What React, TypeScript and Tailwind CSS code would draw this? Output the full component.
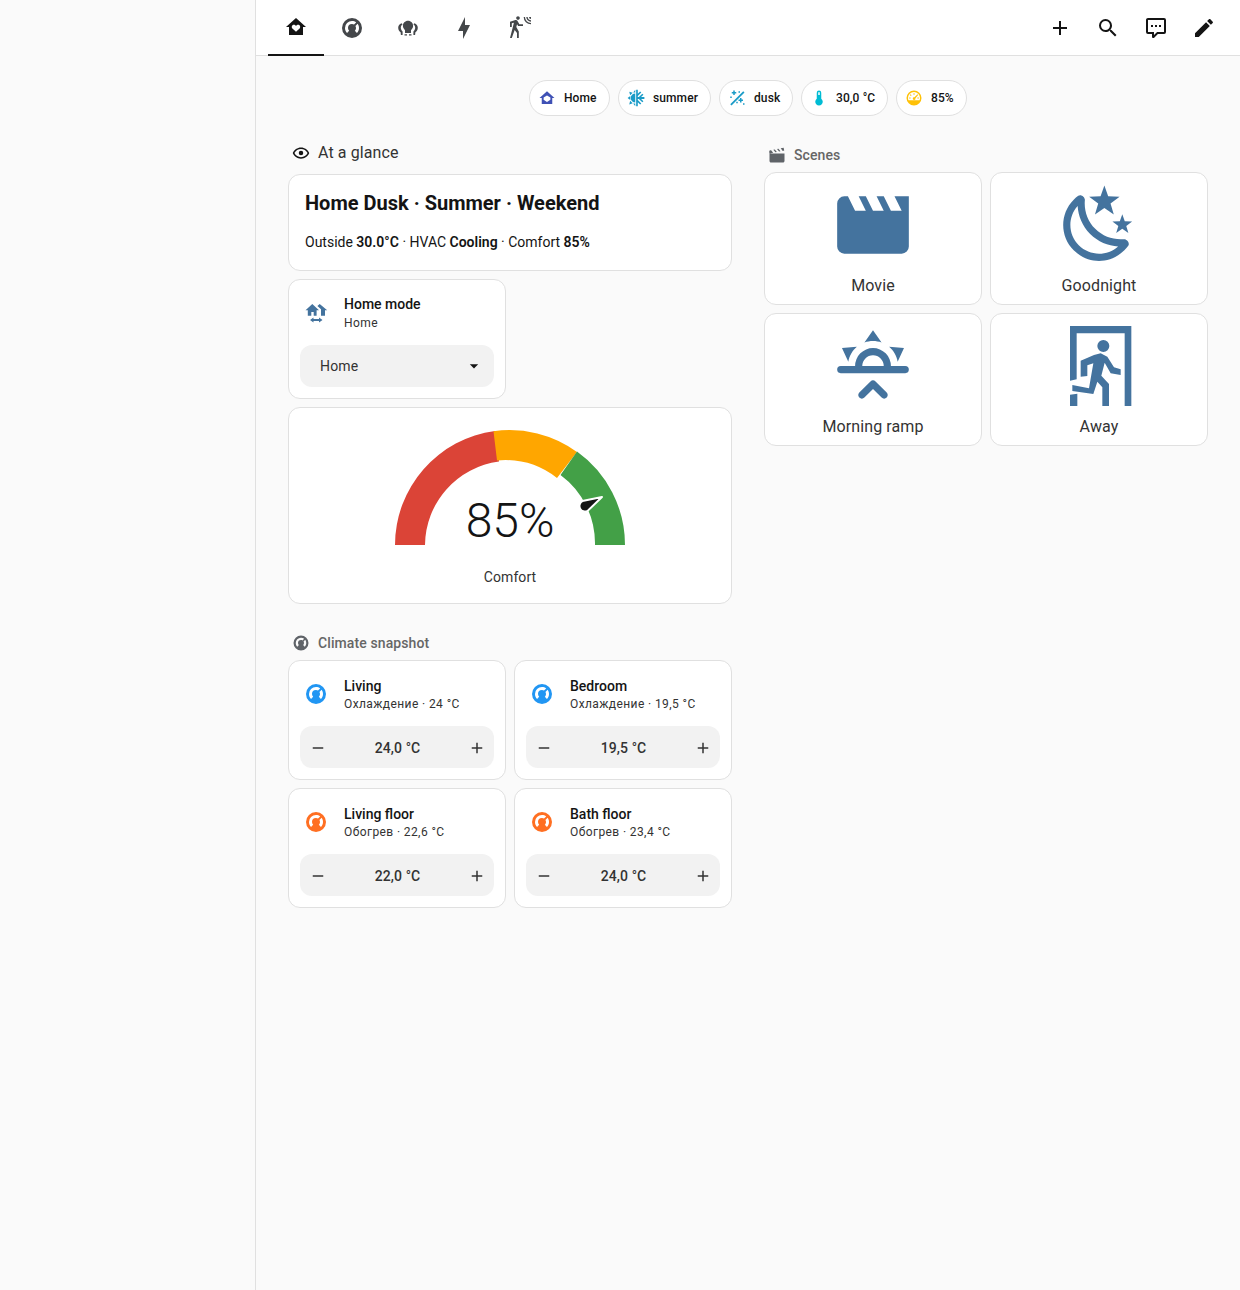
const FONT = "font-['Roboto',sans-serif]";

const mdi = {
  home: "M12 3L2 12H5V20H19V12H22L12 3M12 16.8L8.4 13.4C7.1 12.1 8 9.7 9.8 9.7C10.7 9.7 11.5 10.2 12 10.9C12.5 10.2 13.3 9.7 14.2 9.7C16 9.7 16.9 12.1 15.6 13.4L12 16.8Z",
  thermostat: "M16.95,16.95L14.83,14.83C15.55,14.1 16,13.1 16,12C16,11.26 15.79,10.57 15.43,10L17.6,7.81C18.5,9 19,10.43 19,12C19,13.93 18.22,15.68 16.95,16.95M12,5C13.57,5 15,5.5 16.19,6.4L14,8.56C13.43,8.21 12.74,8 12,8A4,4 0 0,0 8,12C8,13.1 8.45,14.1 9.17,14.83L7.05,16.95C5.78,15.68 5,13.93 5,12A7,7 0 0,1 12,5M12,2A10,10 0 0,0 2,12A10,10 0 0,0 12,22A10,10 0 0,0 22,12A10,10 0 0,0 12,2Z",
  lights: "M12 4.7C9 4.7 6.9 7 6.9 9.8C6.9 11.8 8 13.3 9 14.2V17H15V14.2C16 13.3 17.1 11.8 17.1 9.8C17.1 7 15 4.7 12 4.7M5.5 7.2C3.5 8 2.2 9.6 2.2 11.8C2.2 13.8 3.3 15.3 4.6 16.3L4.9 19H6.6V15.5C5.6 14.6 4.8 13.3 4.8 11.8C4.8 10.2 5.5 9 6.6 8.2L5.5 7.2M18.5 7.2L17.4 8.2C18.5 9 19.2 10.2 19.2 11.8C19.2 13.3 18.4 14.6 17.4 15.5V19H19.1L19.4 16.3C20.7 15.3 21.8 13.8 21.8 11.8C21.8 9.6 20.5 8 18.5 7.2M8.5 18.3H11V19.5H8.5V18.3M13 18.3H15.5V19.5H13V18.3Z",
  bolt: "M11 15H6L13 1V9H18L11 23V15Z",
  motion: "M10,0.2C9,0.2 8.2,1 8.2,2C8.2,3 9,3.8 10,3.8C11,3.8 11.8,3 11.8,2C11.8,1 11,0.2 10,0.2M15.67,1A7.33,7.33 0 0,0 23,8.33V7A6,6 0 0,1 17,1H15.67M18.33,1C18.33,3.58 20.42,5.67 23,5.67V4.33C21.16,4.33 19.67,2.84 19.67,1H18.33M21,1A2,2 0 0,0 23,3V1H21M7.92,4.03C7.75,4.03 7.58,4.06 7.42,4.11L2,5.8V11H3.8V7.33L5.91,6.67L2,22H3.8L6.67,13.89L9,17V22H10.8V15.59L8.31,11.05L9.04,8.18L10.12,10H15V8.2H11.38L9.38,4.87C9.08,4.37 8.54,4.03 7.92,4.03Z",
  plus: "M19,13H13V19H11V13H5V11H11V5H13V11H19V13Z",
  minus: "M19,13H5V11H19V13Z",
  magnify: "M9.5,3A6.5,6.5 0 0,1 16,9.5C16,11.11 15.41,12.59 14.44,13.73L14.71,14H15.5L20.5,19L19,20.5L14,15.5V14.71L13.73,14.44C12.59,15.41 11.11,16 9.5,16A6.5,6.5 0 0,1 3,9.5A6.5,6.5 0 0,1 9.5,3M9.5,5C7,5 5,7 5,9.5C5,12 7,14 9.5,14C12,14 14,12 14,9.5C14,7 12,5 9.5,5Z",
  comment: "M9,22A1,1 0 0,1 8,21V18H4A2,2 0 0,1 2,16V4C2,2.89 2.9,2 4,2H20A2,2 0 0,1 22,4V16A2,2 0 0,1 20,18H13.9L10.2,21.71C10,21.9 9.75,22 9.5,22V22H9M10,16V19.08L13.08,16H20V4H4V16H10M17,11H15V9H17V11M13,11H11V9H13V11M9,11H7V9H9V11Z",
  pencil: "M20.71,7.04C21.1,6.65 21.1,6 20.71,5.63L18.37,3.29C18,2.9 17.35,2.9 16.96,3.29L15.12,5.12L18.87,8.87M3,17.25V21H6.75L17.81,9.93L14.06,6.18L3,17.25Z",
  eye: "M12,9A3,3 0 0,1 15,12A3,3 0 0,1 12,15A3,3 0 0,1 9,12A3,3 0 0,1 12,9M12,4.5C17,4.5 21.27,7.61 23,12C21.27,16.39 17,19.5 12,19.5C7,19.5 2.73,16.39 1,12C2.73,7.61 7,4.5 12,4.5M3.18,12C4.83,15.36 8.24,17.5 12,17.5C15.76,17.5 19.17,15.36 20.82,12C19.17,8.64 15.76,6.5 12,6.5C8.24,6.5 4.83,8.64 3.18,12Z",
  clapper: "M20.84 2.18L16.91 2.96L19.65 6.5L21.62 6.1L20.84 2.18M13.97 3.54L12 3.93L14.75 7.46L16.71 7.07L13.97 3.54M9.07 4.5L7.1 4.91L9.85 8.44L11.81 8.05L9.07 4.5M4.16 5.5L3.18 5.69A2 2 0 0 0 1.61 8.04L2 10L6.9 9.03L4.16 5.5M2 10V20C2 21.11 2.9 22 4 22H20C21.11 22 22 21.11 22 20V10H2Z",
  movie: "M18,4L20,8H17L15,4H13L15,8H12L10,4H8L10,8H7L5,4H4A2,2 0 0,0 2,6V18A2,2 0 0,0 4,20H20A2,2 0 0,0 22,18V4H18Z",
  night: "M17.75,4.09L15.22,6.03L16.13,9.09L13.5,7.28L10.87,9.09L11.78,6.03L9.25,4.09L12.44,4L13.5,1L14.56,4L17.75,4.09M21.25,11L19.61,12.25L20.2,14.23L18.5,13.06L16.8,14.23L17.39,12.25L15.75,11L17.81,10.95L18.5,9L19.19,10.95L21.25,11M18.97,15.95C19.8,15.87 20.69,17.05 20.16,17.8C19.84,18.25 19.5,18.67 19.08,19.07C15.17,23 8.84,23 4.94,19.07C1.03,15.17 1.03,8.83 4.94,4.93C5.34,4.53 5.76,4.17 6.21,3.85C6.96,3.32 8.14,4.21 8.06,5.04C7.79,7.9 8.75,10.87 10.95,13.06C13.14,15.26 16.1,16.22 18.97,15.95M17.33,17.97C14.5,17.81 11.7,16.64 9.53,14.5C7.36,12.31 6.2,9.5 6.04,6.68C3.23,9.82 3.34,14.64 6.35,17.66C9.37,20.67 14.19,20.78 17.33,17.97Z",
  sunrise: "M3,12H7A5,5 0 0,1 12,7A5,5 0 0,1 17,12H21A1,1 0 0,1 22,13A1,1 0 0,1 21,14H3A1,1 0 0,1 2,13A1,1 0 0,1 3,12M15,12A3,3 0 0,0 12,9A3,3 0 0,0 9,12H15M12,2L14.39,5.42C13.65,5.15 12.84,5 12,5C11.16,5 10.35,5.15 9.61,5.42L12,2M3.34,7L7.5,6.65C6.9,7.16 6.36,7.78 5.94,8.5C5.5,9.24 5.25,10 5.11,10.79L3.34,7M20.65,7L18.88,10.79C18.74,10 18.47,9.23 18.05,8.5C17.63,7.78 17.1,7.15 16.5,6.64L20.65,7M12.71,16.3L15.82,19.41C16.21,19.8 16.21,20.43 15.82,20.82C15.43,21.21 14.8,21.21 14.41,20.82L12,18.41L9.59,20.82C9.2,21.21 8.57,21.21 8.18,20.82C7.79,20.43 7.79,19.8 8.18,19.41L11.29,16.3C11.5,16.1 11.74,16 12,16C12.26,16 12.5,16.1 12.71,16.3Z",
  exit: "M3.3 0H21.7V24H19.7V2.2H5.3V16L3.3 16.4V0M3.3 20.6L5.5 20.3V24H3.3V20.6M13.3 4.2A1.8 1.8 0 1 1 13.3 7.8A1.8 1.8 0 1 1 13.3 4.2M6.5 10.4L10.5 8.7L12.5 8.2L14.5 9.2L16.5 12.4L18.5 13V14.7L15.5 14.2L13.7 11L12.7 14.9L15 17.4V24H13V18.4L11.5 16.7L10.3 20.4L4 19.5V17.7L9 18.7L10.3 11.2L8.5 11.8V15L6.5 15.2V10.4Z",
  homeSwitch: "M8.3 3L1.5 9.3H3.8V14.8H7.3V11H9.7V14.8H12.6V9.3H15L8.3 3M15.7 3L13.4 5L17 8.3V14.8H21V9.3H23.2L15.7 3M9.5 16.5L6 19L9.5 21.5V20H15V21.5L18.5 19L15 16.5V18H9.5V16.5Z",
  menuDown: "M7,10L12,15L17,10H7Z",
  chipHome: "M12 3L2 12H5V20H19V12H22L12 3M12 8.8L16.5 11.2V14.2L12 17.4L7.5 14.2V11.2L12 8.8Z",
  summer: "M11 6A6 6 0 0 0 11 18V6M11 1L8.3 4.8H11V1M3 3.5L4.2 8.2L7.6 5L3 3.5M0.8 12L4.4 14.6V9.4L0.8 12M3 20.5L7.6 19L4.2 15.8L3 20.5M11 23V19.2H8.3L11 23M12.2 1H14.4V6.4L17.5 3.3L19 4.8L14.4 9.4V10.8H15.8L20.4 6.2L21.9 7.7L18.8 10.8H23.2V13.2H18.8L21.9 16.3L20.4 17.8L15.8 13.2H14.4V14.6L19 19.2L17.5 20.7L14.4 17.6V23H12.2V1Z",
  dusk: "M3 20.3L20.3 3L22 4.7L4.7 22L3 20.3M7 2H9V4H11V6H9V8H7V6H5V4H7V2M3 10H5V12H3V10M11 17H13V19H11V17M16 12H18V14H20V16H18V18H16V16H14V14H16V12M20 19H22V21H20V19M14 3H16V5H14V3Z",
  thermo: "M15 13V5A3 3 0 0 0 9 5V13A5 5 0 1 0 15 13M12 4A1 1 0 0 1 13 5V8H11V5A1 1 0 0 1 12 4Z",
  gauge: "M12 2A10 10 0 1 0 12 22A10 10 0 1 0 12 2M12 4A8 8 0 0 1 20 12C20 13.1 19.8 14.1 19.4 15H4.6C4.2 14.1 4 13.1 4 12A8 8 0 0 1 12 4M11.3 5.5V7.5H12.7V5.5H11.3M7.4 7L6.4 8L7.8 9.4L8.8 8.4L7.4 7M16.6 7L12.6 11.1A1.8 1.8 0 1 0 13.9 12.4L17.6 8L16.6 7M5.5 11.3V12.7H7.5V11.3H5.5M16.5 11.3V12.7H18.5V11.3H16.5Z",
};

function Icon({ d, className }: { d: string; className: string }) {
  return (
    <svg viewBox="0 0 24 24" fill="currentColor" fillRule="evenodd" className={`shrink-0 ${className}`}>
      <path d={d} />
    </svg>
  );
}

function Card({ className, children }: { className?: string; children: React.ReactNode }) {
  return <div className={`rounded-xl border border-[#e0e0e0] bg-white ${className ?? ""}`}>{children}</div>;
}

const chips = [
  { icon: mdi.chipHome, color: "text-[#3f51b5]", label: "Home", wrap: "w-[81px]" },
  { icon: mdi.summer, color: "text-[#1a9bc7]", label: "summer", wrap: "w-[93px]" },
  { icon: mdi.dusk, color: "text-[#1a9bc7]", label: "dusk", wrap: "w-[74px]" },
  { icon: mdi.thermo, color: "text-[#00bcd4]", label: "30,0 °C", wrap: "w-[87px]" },
  { icon: mdi.gauge, color: "text-[#ffc107]", label: "85%", wrap: "w-[71px]" },
];

const scenes = [
  { icon: mdi.movie, label: "Movie", size: "h-[86px] w-[86px]" },
  { icon: mdi.night, label: "Goodnight", size: "h-[86px] w-[86px]" },
  { icon: mdi.sunrise, label: "Morning ramp", size: "h-[86px] w-[86px]" },
  { icon: mdi.exit, label: "Away", size: "my-[3px] h-[80px] w-[80px]" },
];

const climates = [
  { name: "Living", state: "Охлаждение · 24 °C", target: "24,0 °C", color: "text-[#2196f3]" },
  { name: "Bedroom", state: "Охлаждение · 19,5 °C", target: "19,5 °C", color: "text-[#2196f3]" },
  { name: "Living floor", state: "Обогрев · 22,6 °C", target: "22,0 °C", color: "text-[#ff6f22]" },
  { name: "Bath floor", state: "Обогрев · 23,4 °C", target: "24,0 °C", color: "text-[#ff6f22]" },
];

function Gauge() {
  return (
    <svg viewBox="0 0 230 115" className="h-[115px] w-[230px]">
      <path d="M0 115A115 115 0 0 1 100 1L104 31.5A85 85 0 0 0 30 115Z" fill="#db4437" />
      <path d="M98.5 1.2A115 115 0 0 1 182 22L162 48A85 85 0 0 0 102 30.5Z" fill="#ffa600" />
      <path d="M182 21.5A115 115 0 0 1 230 115H200A85 85 0 0 0 165.5 45Z" fill="#43a047" />
      <path d="M207 67L192.6 80.9A5.5 5.5 0 1 1 187.4 71.1Z" fill="#141414" stroke="#fff" strokeWidth="2" strokeLinejoin="round" />
    </svg>
  );
}

export default function App() {
  return (
    <div className={`flex min-h-[1290px] bg-[#fafafa] text-[#141414] ${FONT}`}>
      <aside className="w-[256px] shrink-0 border-r border-[#e0e0e0] bg-[#fafafa]" />
      <div className="min-w-0 flex-1">
        <header className="flex h-[56px] items-center justify-between border-b border-[#e0e0e0] bg-white px-[12px]">
          <nav className="flex h-[56px] self-start">
            <div className="flex w-[56px] items-center justify-center border-b-2 border-[#141414]">
              <Icon d={mdi.home} className="h-6 w-6 text-[#141414]" />
            </div>
            {[mdi.thermostat, mdi.lights, mdi.bolt, mdi.motion].map((d) => (
              <div key={d} className="flex w-[56px] items-center justify-center">
                <Icon d={d} className="h-6 w-6 text-[#44474a]" />
              </div>
            ))}
          </nav>
          <div className="flex">
            {[mdi.plus, mdi.magnify, mdi.comment, mdi.pencil].map((d) => (
              <div key={d} className="flex h-12 w-12 items-center justify-center">
                <Icon d={d} className="h-6 w-6 text-[#141414]" />
              </div>
            ))}
          </div>
        </header>

        <main className="px-[32px] pt-[24px]">
          <div className="flex justify-center gap-2">
            {chips.map((c) => (
              <div key={c.label} className={`flex h-[36px] items-center gap-2 rounded-[18px] border border-[#e0e0e0] bg-white pl-2 ${c.wrap}`}>
                <Icon d={c.icon} className={`h-[18px] w-[18px] ${c.color}`} />
                <span className="text-[12px] font-medium leading-4 tracking-[0.1px]">{c.label}</span>
              </div>
            ))}
          </div>

          <div className="mt-[22px] flex gap-[32px]">
            <section className="w-[444px] shrink-0">
              <div className="flex h-[30px] items-center gap-2 pl-[4px]">
                <Icon d={mdi.eye} className="h-[18px] w-[18px] text-[#141414]" />
                <span className="text-[16px] leading-5 tracking-[0.1px] text-[#333]">At a glance</span>
              </div>
              <div className="mt-[6px] flex flex-col gap-2">
                <Card className="h-[97px] px-4 pt-[16px]">
                  <div className="text-[20px] font-bold leading-6 text-[#141414]">Home Dusk · Summer · Weekend</div>
                  <div className="mt-[17px] text-[14px] leading-5 text-[#141414]">
                    Outside <b className="font-semibold">30.0°C</b> · HVAC <b className="font-semibold">Cooling</b> · Comfort <b className="font-semibold">85%</b>
                  </div>
                </Card>
                <Card className="h-[120px] w-[218px] px-[11px] pt-[14px]">
                  <div className="flex items-center gap-4 pl-[4px]">
                    <Icon d={mdi.homeSwitch} className="h-6 w-6 text-[#44739e]" />
                    <div>
                      <div className="text-[14px] font-medium leading-5">Home mode</div>
                      <div className="mt-[1px] text-[12px] leading-4 tracking-[0.4px] text-[#333]">Home</div>
                    </div>
                  </div>
                  <div className="mt-[14px] flex h-[42px] items-center justify-between rounded-xl bg-[#f2f2f2] pl-[20px] pr-[10px]">
                    <span className="text-[14px] tracking-[0.2px] text-[#333]">Home</span>
                    <Icon d={mdi.menuDown} className="h-5 w-5 text-[#141414]" />
                  </div>
                </Card>
                <Card className="flex h-[197px] flex-col items-center pt-[22px]">
                  <div className="relative h-[115px] w-[230px]">
                    <Gauge />
                    <div className="absolute inset-x-0 top-[59px] text-center text-[48px] font-[350] leading-[64px] text-[#141414]">85%</div>
                  </div>
                  <div className="mt-[22px] text-[14px] leading-5 tracking-[0.1px] text-[#333]">Comfort</div>
                </Card>
              </div>

              <div className="mt-[23px] flex h-[32px] items-center gap-2 pl-[4px]">
                <Icon d={mdi.thermostat} className="h-[18px] w-[18px] text-[#5f6368]" />
                <span className="text-[14px] font-medium leading-5 tracking-[0.1px] text-[#666]">Climate snapshot</span>
              </div>
              <div className="mt-[1px] grid grid-cols-2 gap-2">
                {climates.map((c) => (
                  <Card key={c.name} className="h-[120px] px-[11px] pt-[15px]">
                    <div className="flex items-center gap-4 pl-[4px]">
                      <Icon d={mdi.thermostat} className={`h-6 w-6 ${c.color}`} />
                      <div>
                        <div className="text-[14px] font-medium leading-5">{c.name}</div>
                        <div className="whitespace-nowrap text-[12px] leading-4 tracking-[0.4px] text-[#333]">{c.state}</div>
                      </div>
                    </div>
                    <div className="mt-[14px] flex h-[42px] items-center justify-between rounded-xl bg-[#f2f2f2] pl-[9px] pr-[8px] pt-[2px] text-[#333]">
                      <Icon d={mdi.minus} className="h-[18px] w-[18px]" />
                      <span className="text-[14px] font-medium tracking-[0.1px]">{c.target}</span>
                      <Icon d={mdi.plus} className="h-[18px] w-[18px]" />
                    </div>
                  </Card>
                ))}
              </div>
            </section>

            <section className="min-w-0 flex-1">
              <div className="flex h-[34px] items-center gap-2 pl-[4px]">
                <Icon d={mdi.clapper} className="h-[18px] w-[18px] text-[#5f6368]" />
                <span className="text-[14px] font-medium leading-5 tracking-[0.1px] text-[#666]">Scenes</span>
              </div>
              <div className="grid grid-cols-2 gap-2">
                {scenes.map((s) => (
                  <Card key={s.label} className="flex h-[133px] flex-col items-center pt-[9px]">
                    <Icon d={s.icon} className={`text-[#44739e] ${s.size}`} />
                    <span className="mt-[8px] text-[16px] leading-5 tracking-[0.1px] text-[#333]">{s.label}</span>
                  </Card>
                ))}
              </div>
            </section>
          </div>
        </main>
      </div>
    </div>
  );
}
